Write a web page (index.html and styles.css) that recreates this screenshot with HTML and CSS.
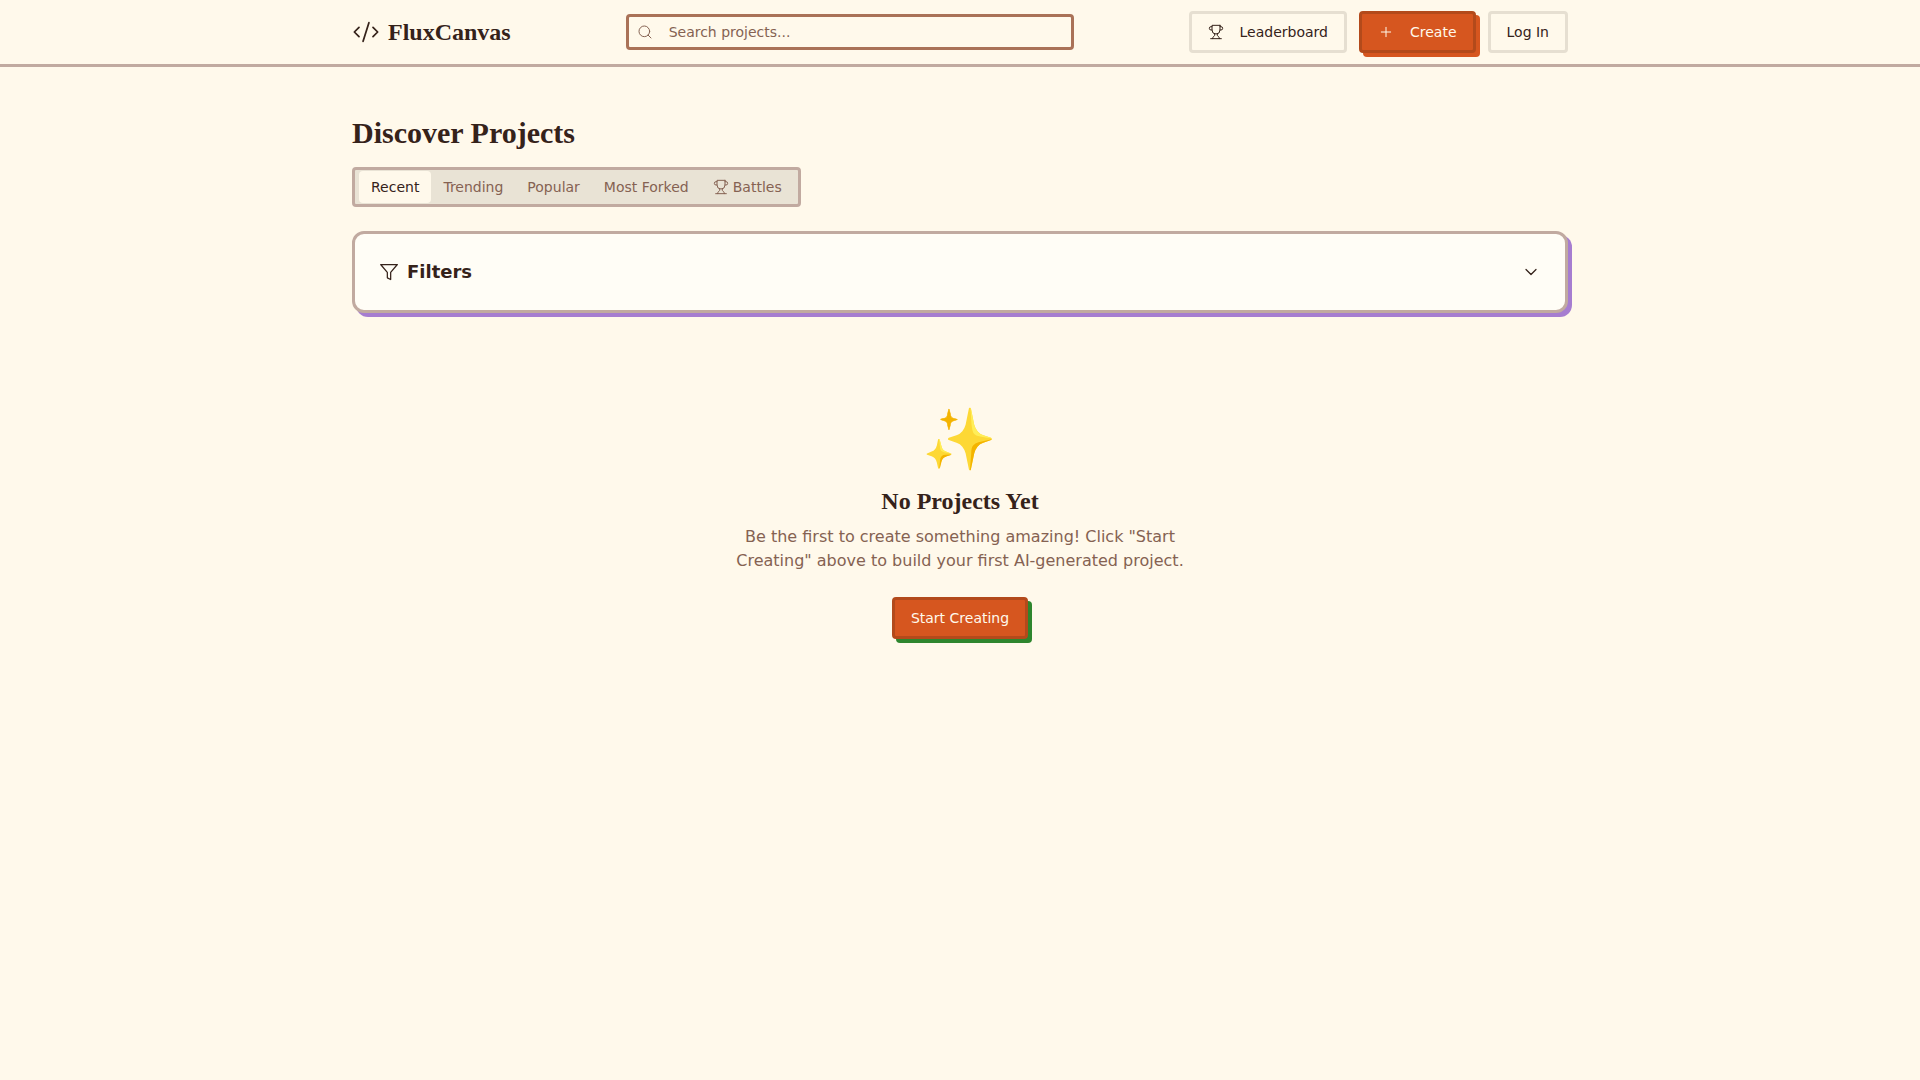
FILE: index.html
```html
<!DOCTYPE html>
<html lang="en">
<head>
<meta charset="utf-8">
<meta name="viewport" content="width=device-width, initial-scale=1">
<title>FluxCanvas</title>
<link rel="stylesheet" href="styles.css">
</head>
<body>
<header class="site-header">
  <div class="container header-row">
    <a class="brand" href="#">
      <svg class="icon icon-brand" viewBox="0 0 24 24" aria-hidden="true"><path d="m18 16 4-4-4-4M6 8l-4 4 4 4M14.500 4l-5 16"/></svg>
      <span>FluxCanvas</span>
    </a>
    <form class="search" role="search">
      <svg class="icon icon-small icon-search" viewBox="0 0 24 24" aria-hidden="true"><circle cx="11" cy="11" r="8"/><path d="m21 21-4.300-4.300"/></svg>
      <input class="search-input" type="search" placeholder="Search projects..." aria-label="Search projects">
    </form>
    <nav class="actions" aria-label="Main">
      <a class="button" href="#">
        <svg class="icon icon-small icon-lead" viewBox="0 0 24 24" aria-hidden="true"><path d="M6 9H4.500a2.500 2.500 0 0 1 0-5H6M18 9h1.500a2.500 2.500 0 0 0 0-5H18M4 22h16M10 14.660V17c0 .55-.47.98-.97 1.210C7.850 18.750 7 20.240 7 22M14 14.660V17c0 .55.47.98.97 1.210C16.150 18.750 17 20.240 17 22M18 2H6v7a6 6 0 0 0 12 0V2Z"/></svg>
        Leaderboard
      </a>
      <button class="button button-primary" type="button">
        <svg class="icon icon-small icon-lead" viewBox="0 0 24 24" aria-hidden="true"><path d="M5 12h14M12 5v14"/></svg>
        Create
      </button>
      <button class="button" type="button">Log In</button>
    </nav>
  </div>
</header>
<main class="container content">
  <h1 class="page-title">Discover Projects</h1>
  <div class="tabs" role="tablist">
    <button class="tab tab-active" type="button" role="tab" aria-selected="true">Recent</button>
    <button class="tab" type="button" role="tab" aria-selected="false">Trending</button>
    <button class="tab" type="button" role="tab" aria-selected="false">Popular</button>
    <button class="tab" type="button" role="tab" aria-selected="false">Most Forked</button>
    <button class="tab" type="button" role="tab" aria-selected="false">
      <svg class="icon icon-small" viewBox="0 0 24 24" aria-hidden="true"><path d="M6 9H4.500a2.500 2.500 0 0 1 0-5H6M18 9h1.500a2.500 2.500 0 0 0 0-5H18M4 22h16M10 14.660V17c0 .55-.47.98-.97 1.210C7.850 18.750 7 20.240 7 22M14 14.660V17c0 .55.47.98.97 1.210C16.150 18.750 17 20.240 17 22M18 2H6v7a6 6 0 0 0 12 0V2Z"/></svg>
      Battles
    </button>
  </div>
  <button class="filters" type="button" aria-expanded="false">
    <svg class="icon icon-medium" viewBox="0 0 24 24" aria-hidden="true"><path d="M22 3H2l8 9.460V19l4 2v-8.540L22 3Z"/></svg>
    <span class="filters-label">Filters</span>
    <svg class="icon icon-medium" viewBox="0 0 24 24" aria-hidden="true"><path d="m6 9 6 6 6-6"/></svg>
  </button>
  <section class="empty">
    <div class="empty-emoji" aria-hidden="true">✨</div>
    <h2 class="empty-title">No Projects Yet</h2>
    <p class="empty-text">Be the first to create something amazing! Click "Start Creating" above to build your first AI-generated project.</p>
    <button class="button button-primary button-start" type="button">Start Creating</button>
  </section>
</main>
</body>
</html>
```
FILE: styles.css
```css
:root {
  --bg: #fff9eb;
  --ink: #35221a;
  --muted: #856252;
  --line: #c1aaa0;
  --accent: #d6561f;
}

* { box-sizing: border-box; }

body {
  margin: 0;
  min-height: 100vh;
  background: var(--bg);
  color: var(--ink);
  font: 16px/24px "DejaVu Sans", sans-serif;
}

button, input { font: inherit; color: inherit; }
button { cursor: pointer; }

.container {
  max-width: 1280px;
  margin: 0 auto;
  padding: 0 32px;
}

.icon {
  flex: none;
  fill: none;
  stroke: currentColor;
  stroke-width: 1.5;
  stroke-linecap: round;
  stroke-linejoin: round;
}
.icon-small { width: 16px; height: 16px; }
.icon-medium { width: 20px; height: 20px; }
.icon-brand { width: 28px; height: 28px; }
.icon-lead { margin-right: 8px; }

.site-header { border-bottom: 3px solid var(--line); }

.header-row {
  display: flex;
  align-items: center;
  justify-content: space-between;
  min-height: 64px;
}

.brand {
  display: flex;
  align-items: center;
  gap: 8px;
  color: inherit;
  text-decoration: none;
  font: bold 24px/32px "Liberation Serif", serif;
}

.search {
  display: flex;
  align-items: center;
  gap: 16px;
  flex: 0 1 448px;
  height: 36px;
  padding: 0 8px;
  border: 3px solid #aa7257;
  border-radius: 4px;
}
.icon-search { color: var(--muted); }
.search-input {
  flex: 1;
  min-width: 0;
  padding: 0;
  border: 0;
  outline: 0;
  background: none;
  font-size: 14px;
  line-height: 20px;
}
.search-input::placeholder { color: var(--muted); opacity: 1; }

.actions { display: flex; gap: 12px; }

.button {
  display: inline-flex;
  align-items: center;
  justify-content: center;
  gap: 8px;
  height: 42px;
  padding: 0 16px;
  border: 3px solid #e6dfd1;
  border-radius: 4px;
  background: var(--bg);
  color: var(--ink);
  font-size: 14px;
  line-height: 20px;
  text-decoration: none;
  white-space: nowrap;
}
.button-primary {
  border-color: #b34a1b;
  background: var(--accent);
  color: var(--bg);
  box-shadow: 4px 4px 0 var(--accent);
}
.button-start { box-shadow: 4px 4px 0 #2e862e; }

.content { padding-top: 48px; }

.page-title {
  margin: 0 0 16px;
  font: bold 30px/36px "Liberation Serif", serif;
}

.tabs {
  display: flex;
  align-items: center;
  width: fit-content;
  height: 40px;
  padding: 0 4px;
  border: 3px solid var(--line);
  border-radius: 4px;
  background: #e9e3d5;
}
.tab {
  display: flex;
  align-items: center;
  gap: 4px;
  padding: 6px 12px;
  border: 0;
  border-radius: 4px;
  background: none;
  color: var(--muted);
  font-size: 14px;
  line-height: 20px;
}
.tab-active { background: var(--bg); color: var(--ink); }

.filters {
  display: flex;
  align-items: center;
  gap: 8px;
  width: 100%;
  margin-top: 24px;
  padding: 24px;
  border: 3px solid var(--line);
  border-radius: 12px;
  background: #fffdf6;
  box-shadow: 4px 4px 0 #a67dd0;
  text-align: left;
}
.filters-label {
  flex: 1;
  font-size: 18px;
  line-height: 28px;
  font-weight: bold;
}

.empty {
  display: flex;
  flex-direction: column;
  align-items: center;
  padding: 96px 0;
  text-align: center;
}
.empty-emoji {
  margin-bottom: 16px;
  font: 60px/60px "DejaVu Sans", "Noto Color Emoji", sans-serif;
}
.empty-title {
  margin: 0 0 8px;
  font: bold 24px/32px "Liberation Serif", serif;
}
.empty-text {
  max-width: 448px;
  margin: 0 0 24px;
  color: var(--muted);
}
```
